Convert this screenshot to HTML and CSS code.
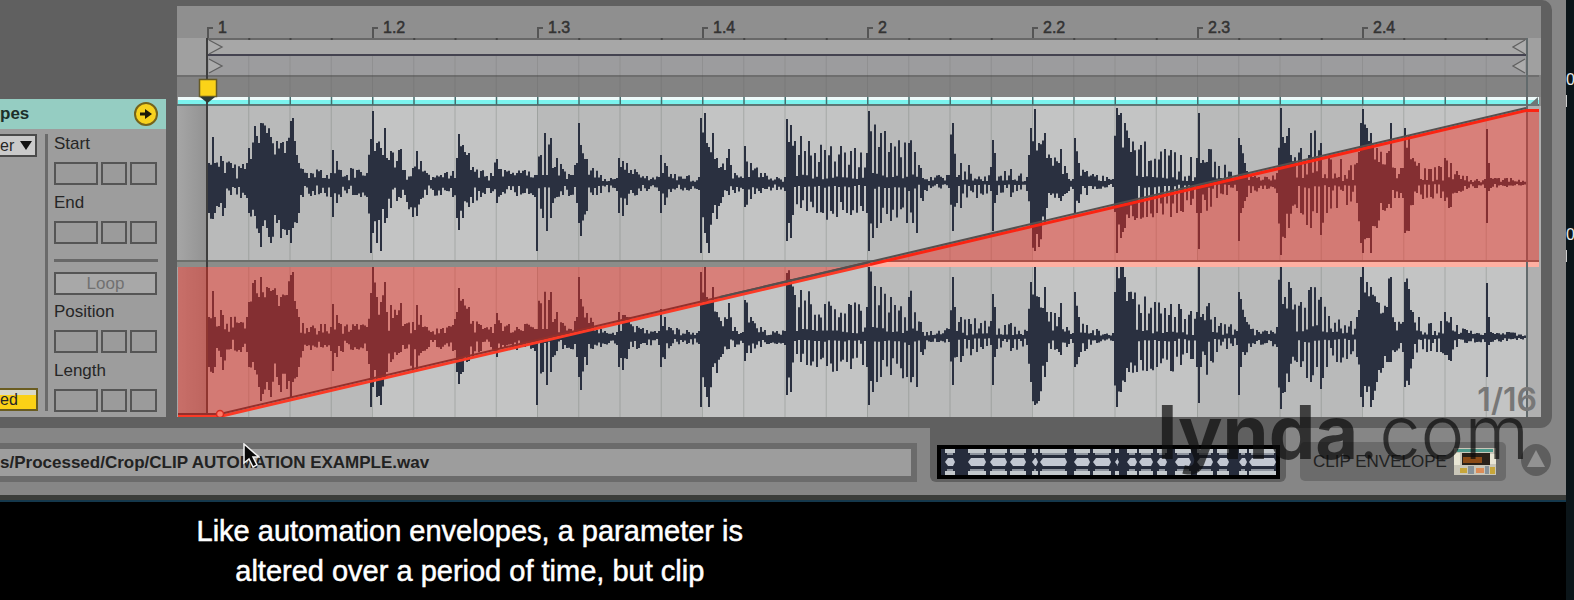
FILE: index.html
```html
<!DOCTYPE html>
<html lang="en">
<head>
<meta charset="utf-8">
<title>Clip automation example</title>
<link rel="stylesheet" href="styles.css">
</head>
<body>
<div class="stage">
  <div class="player">
    <main class="window">
      <div class="editor">
        <section class="envelopes">
          <header class="env-head">
            <h2>pes</h2>
            <button class="env-go" aria-label="Show envelopes">
              <svg viewBox="0 0 24 24"><circle cx="12" cy="12" r="11" fill="#f7d21e" stroke="#75631a" stroke-width="2"/><path d="M6 12h7" stroke="#1c1908" stroke-width="3"/><path d="M11 7l7 5-7 5z" fill="#1c1908"/></svg>
            </button>
          </header>
          <div class="env-body">
            <div class="env-device">
              <div class="device-pick"><select aria-label="Control"><option>er</option></select><span class="caret"></span></div>
              <button class="linked">ed</button>
            </div>
            <div class="env-region">
              <div class="field" role="group" aria-labelledby="f1"><span id="f1">Start</span><div class="cells"><input aria-label="Start bar"><input aria-label="Start beat"><input aria-label="Start sixteenth"></div></div>
              <div class="field" role="group" aria-labelledby="f2"><span id="f2">End</span><div class="cells"><input aria-label="End bar"><input aria-label="End beat"><input aria-label="End sixteenth"></div></div>
              <div class="loop-row"><button class="loop">Loop</button></div>
              <div class="field" role="group" aria-labelledby="f3"><span id="f3">Position</span><div class="cells"><input aria-label="Position bar"><input aria-label="Position beat"><input aria-label="Position sixteenth"></div></div>
              <div class="field" role="group" aria-labelledby="f4"><span id="f4">Length</span><div class="cells"><input aria-label="Length bar"><input aria-label="Length beat"><input aria-label="Length sixteenth"></div></div>
            </div>
          </div>
        </section>
        <section class="sample">
          <div class="ruler">
            <span>1</span><span>1.2</span><span>1.3</span><span>1.4</span><span>2</span><span>2.2</span><span>2.3</span><span>2.4</span>
          </div>
          <svg class="wave" id="wave" viewBox="177 38 1364 379" preserveAspectRatio="none" role="img" aria-label="Sample waveform with envelope"></svg>
          <span class="grid-size">1/16</span>
        </section>
      </div>
      <footer class="status">
        <div class="path"><input aria-label="Sample path" readonly value="s/Processed/Crop/CLIP AUTOMATION EXAMPLE.wav"></div>
        <div class="overview"><svg id="mini" viewBox="0 0 343 34" preserveAspectRatio="none" role="img" aria-label="Clip overview"></svg></div>
        <div class="device-tab">
          <button class="tab">CLIP ENVELOPE
            <svg viewBox="0 0 42 27"><path fill="#c9c6b8" d="M0 0h42v27H0z"/><path fill="#4d9a8b" d="M3 1h36v3H3z"/><path fill="#292119" d="M8 5h28v12H8z"/><path fill="#8b4b17" d="M9 9h19v6H9z"/><path fill="#e8e5d4" d="M0 5h6v12H0zM36 6h6v10h-6z"/><path fill="#c7a63b" d="M6 20h7v5H6zM36 19h5v7h-5z"/><path fill="#dc8d58" d="M22 20h8v5h-8z"/><path fill="#86929a" d="M14 18h6v8h-6zM31 18h4v8h-4z"/></svg>
          </button>
          <button class="fold" aria-label="Fold"><svg viewBox="0 0 32 36"><ellipse cx="16" cy="18" rx="15" ry="16" fill="#5e5e5e"/><path d="M16 8l9 17H7z" fill="#929292"/></svg></button>
        </div>
      </footer>
      <div class="watermark"><b>lynda</b>.com</div>
      <svg class="cursor" viewBox="0 0 18 26"><path d="M2 1v19l5-4 4 8 4-2-4-8h6z" fill="#080808" stroke="#f2f2f2" stroke-width="1.5"/></svg>
    </main>
    <p class="caption">Like automation envelopes, a parameter is<br>altered over a period of time, but clip</p>
  </div>
  <aside class="edge"><span>0</span><i></i><span>0</span><i></i></aside>
</div>
<script src="wave.js"></script>
</body>
</html>
```

FILE: styles.css
```css
* { box-sizing: border-box; }
body {
  margin: 0;
  background: #000;
  color: #262626;
  font-family: "Liberation Sans", Arial, sans-serif;
  font-size: 16px;
}
button, input, select { font: inherit; color: inherit; margin: 0; padding: 0; border-radius: 0; }
.stage { display: flex; min-height: 100vh; }
.player { flex: 1; min-width: 0; }
.window {
  position: relative;
  background: #868686;
  border-bottom: 2px solid #15384c;
}
.editor {
  display: flex;
  align-items: flex-end;
  gap: 11px;
  margin-right: 14px;
  padding: 6px 11px 11px 0;
  background: #606060;
  border-radius: 0 10px 12px 0;
}

.envelopes { width: 166px; background: #9d9d9d; overflow: hidden; }
.env-head {
  display: flex;
  align-items: center;
  justify-content: space-between;
  height: 30px;
  padding-right: 8px;
  background: #95cdc2;
}
.env-head h2 { margin: 0; font-size: 17px; line-height: 20px; color: #1c2f2a; }
.env-go { width: 24px; height: 24px; border: 0; background: none; }
.env-go svg { display: block; }
.env-body { display: flex; height: 288px; padding-top: 5px; }
.env-device {
  display: flex;
  flex-direction: column;
  justify-content: space-between;
  width: 48px;
  height: 277px;
  border-right: 3px solid #6a6a6a;
}
.device-pick {
  position: relative;
  width: 37px;
  height: 23px;
  background: #cacaca;
  border: 2px solid #4a4a4a;
  border-left: 0;
}
.device-pick select { appearance: none; width: 100%; height: 100%; border: 0; background: none; line-height: 18px; }
.caret {
  position: absolute;
  right: 3px;
  top: 5px;
  border: 6px solid transparent;
  border-top: 9px solid #111;
  border-bottom: 0;
}
.linked {
  width: 38px;
  height: 23px;
  background: linear-gradient(#d8d8c8 5px, #fbd116 5px);
  border: 2px solid #6a5c20;
  border-left: 0;
  text-align: left;
  line-height: 18px;
}
.env-region { padding-left: 6px; width: 110px; }
.field { height: 59px; font-size: 17px; line-height: 20px; }
.cells { display: grid; grid-template-columns: 44px 26px 27px; gap: 3px; margin-top: 8px; }
.cells input { width: 100%; height: 23px; border: 2px solid #555; background: #9b9b9b; }
.loop-row { border-top: 3px solid #686868; margin: 7px 0; padding-top: 10px; }
.loop { width: 103px; height: 23px; border: 2px solid #555; background: #a8a8a8; color: #717171; font-size: 17px; line-height: 18px; }

.sample { position: relative; flex: 1; min-width: 0; background: #8f8f8f; }
.ruler {
  display: grid;
  grid-template-columns: repeat(8, 1fr);
  align-items: end;
  height: 32px;
  padding: 0 14px 0 30px;
}
.ruler span {
  position: relative;
  height: 11px;
  padding-left: 9px;
  border-left: 2px solid #555;
  line-height: 2px;
  color: #333;
  -webkit-text-stroke: 0.5px #333;
}
.ruler span::before { content: ""; position: absolute; left: 0; top: 0; width: 4px; height: 2px; background: #555; }
.wave { display: block; width: 100%; height: 379px; }
.grid-size {
  position: absolute;
  right: 4px;
  bottom: 0;
  font: 600 32px/34px Inter, "Liberation Sans", sans-serif;
  color: #777;
}

.status { display: flex; height: 72px; padding-right: 14px; border-bottom: 5px solid #3b3d3a; }
.path { flex: 1; min-width: 0; padding: 15px 13px 0 0; }
.path input {
  width: 100%;
  height: 39px;
  border: 6px solid #6b6b6b;
  border-left: 0;
  background: #9d9d9d;
  font-size: 17px;
  font-weight: bold;
  color: #222;
}
.overview { width: 356px; height: 54px; padding: 17px 6px 0 7px; background: #606060; border-radius: 0 0 6px 6px; }
.overview svg { display: block; width: 100%; height: 34px; }
.device-tab { display: flex; align-items: flex-start; gap: 14px; padding: 14px 0 0 14px; }
.tab {
  display: flex;
  align-items: center;
  gap: 7px;
  width: 206px;
  height: 39px;
  padding-left: 13px;
  border: 0;
  border-radius: 5px;
  background: #6b6b6b;
  font-size: 17px;
  white-space: nowrap;
  color: #222;
}
.tab svg { width: 42px; height: 27px; flex: none; }
.fold { width: 32px; height: 36px; border: 0; background: none; }
.fold svg { display: block; }

.watermark {
  position: absolute;
  right: 37px;
  bottom: 22px;
  font: 300 74px/92px Inter, sans-serif;
  color: rgba(12, 12, 12, 0.7);
  pointer-events: none;
}
.watermark b { font-weight: 700; }
.cursor { position: absolute; left: 242px; top: 443px; width: 18px; height: 26px; }

.caption {
  width: 60%;
  margin: 0;
  padding: 9px 0 8px;
  text-align: center;
  font-size: 29px;
  line-height: 40px;
  color: #fff;
  -webkit-text-stroke: 0.5px #fff;
}
.edge {
  width: 8px;
  padding-top: 70px;
  overflow: hidden;
  background: #0b1519;
  color: #e8e8e8;
  line-height: 20px;
}
.edge span { display: block; }
.edge i { display: block; width: 1px; height: 12px; margin: 5px 0 118px; background: #ccc; }
```

FILE: wave.js
```js
// Waveform keyframes: x, height above centre, depth below centre, 1 when the stretch is sparse.
const keys = `208 20 30|212 46 36|214 20 30|220 27 20|222 22 33|230 20 12|240 15 15|246 20 15|248 35 30|253 57 33|257 40 50|260 60 64|266 50 45|270 46 60|276 42 40|280 40 55|285 42 52|290 62 60|292 65 45|295 28 40|298 20 30|301 14 14|310 10 13|320 13 10|329 10 14|331 33 34|335 22 20|340 13 14|355 13 12|366 10 14|370 44 70|372 72 50|375 40 60|379 35 68|383 55 40|386 25 35|390 32 25|395 22 18|399 34 15|403 13 12|412 15 34|415 32 33|420 22 16|426 10 12|440 8 12|452 12 14|455 25 35|457 49 47|462 38 35|467 30 24|472 16 20|480 12 14|490 10 10|495 24 20|500 14 12|515 10 13|524 13 10|533 8 14|536 46 68 1|541 46 35 1|545 47 48 1|549 45 35|552 15 20|556 25 14|562 14 12|570 8 12|576 20 20|578 60 40|580 38 53|585 24 28|592 15 12|600 8 10|615 5 8|618 25 30|621 22 33|626 20 22|635 11 12|645 7 8|657 6 8|660 28 30|663 20 22|670 9 9|685 7 7|697 6 7|700 65 70|703 70 50|706 40 60|708 36 70|712 50 30|716 25 36|720 16 20|727 34 12|733 10 10|742 5 6|744 37 24|749 20 16|760 10 10|775 6 7|783 6 8|785 64 58|789 58 55|793 42 30 1|800 47 25 1|806 45 28 1|815 35 30 1|823 33 37 1|835 36 34 1|850 32 32 1|862 28 28 1|866 30 30|868 72 68|871 60 55 1|875 55 45 1|880 50 40 1|890 40 38 1|905 35 40 1|908 40 70 1|911 50 40 1|916 35 50 1|920 15 15|922 5 18|930 6 5|948 8 5|951 60 48|956 33 20 1|960 20 25 1|968 18 20 1|975 18 15 1|990 16 8|991 43 48|993 30 20|996 8 12 1|1010 14 14 1|1025 6 8|1030 55 45|1033 74 68|1038 40 64|1043 50 40|1046 25 25|1050 25 12|1058 20 15|1060 34 18|1065 10 10|1072 4 6|1074 45 30|1078 20 20|1085 12 12|1095 8 6|1112 4 4|1115 75 70|1119 70 55|1124 60 45|1128 45 35|1135 42 35 1|1145 38 34 1|1155 30 30 1|1170 33 34 1|1180 28 28 1|1190 26 22 1|1195 25 30|1197 70 66|1200 20 30|1208 34 38 1|1215 24 15 1|1225 17 12 1|1235 6 8|1238 45 58|1240 38 30|1244 20 18|1250 8 10|1265 6 6|1275 10 10|1279 75 72|1283 40 55|1287 55 45|1295 30 25 1|1300 35 30 1|1310 50 45 1|1316 72 30 1|1320 40 52 1|1325 25 30 1|1335 28 25 1|1345 22 22 1|1355 20 20|1360 60 60|1362 74 70|1366 55 55|1370 50 70|1376 35 45|1385 30 25|1389 60 25|1393 15 15|1402 15 15|1404 55 50|1408 48 48|1412 25 22|1418 20 15 1|1430 14 14 1|1440 16 15 1|1444 25 18|1449 20 24|1455 12 10|1465 7 6|1475 4 5|1484 4 5|1485 54 40|1487 20 8|1490 5 5|1505 5 4|1527 2 2`
  .split('|').map(k => k.split(' ').map(Number));

function columns(seed, step) {
  let s = seed, k = 0;
  const rnd = () => (s = (s * 16807) % 2147483647) / 2147483647;
  const out = [];
  for (let x = 208, n = 0; x < 1527; x += step, n++) {
    while (k < keys.length - 2 && keys[k + 1][0] <= x) k++;
    const a = keys[k], b = keys[k + 1], t = Math.min(1, (x - a[0]) / (b[0] - a[0]));
    const peak = x - a[0] < step;
    const top = a[1] + (b[1] - a[1]) * t, bottom = a[2] + (b[2] - a[2]) * t;
    // Quiet stretches flicker more than the loud hits.
    const low = top < 30 ? 0.2 : 0.55;
    let up = peak ? a[1] : top * (low + (1.15 - low) * rnd());
    let down = peak ? a[2] : bottom * (low + (1.1 - low) * rnd());
    if (a[3]) {
      const phase = n % 5;
      if (phase === 2 || phase === 4) up = up * 0.15 + 1;
      if (phase === 0 || phase === 3) down = down * 0.1 + 1;
    }
    out.push([x, up, down]);
  }
  return out;
}
function wavePath(cy, seed, limit) {
  return columns(seed, 2).map(([x, u, d]) => {
    u = Math.min(u, limit);
    return `M${x} ${(cy - u).toFixed(1)}h2v${(u + d).toFixed(1)}h-2z`;
  }).join('');
}
const rect = (x, y, w, h, f) => `<rect x="${x}" y="${y}" width="${w}" height="${h}" fill="${f}"/>`;

let g = `<defs><linearGradient id="pad"><stop offset="0" stop-color="#a6a6a6"/><stop offset="1" stop-color="#929292"/></linearGradient></defs>`;
g += rect(177, 38, 1364, 37, '#a0a0a0') + rect(207, 39, 1320, 16, '#a7a7a7') + rect(207, 56, 1320, 19, '#9c9c9e');
g += rect(207, 38, 1320, 2, '#686868') + rect(207, 54, 1320, 2, '#444350');
g += rect(177, 75, 1364, 22, '#838383') + rect(177, 75, 1362, 2, '#6e6e6e');
g += rect(177, 106, 30, 311, 'url(#pad)');
for (let i = 0; i < 8; i++) g += rect(207 + i * 165, 106, 165, 311, i % 2 ? '#c3c4c4' : '#b9baba');
g += rect(1527, 106, 14, 311, '#b0b0b0');
g += rect(178, 97, 1361, 3, '#eefafa') + rect(178, 100, 1361, 5, '#7bf3ee') + rect(177, 104, 1362, 2, '#5d7776');
for (let i = 1; i < 32; i++) {
  const x = 207 + i * 41.25;
  g += rect(x, 56, 1, 41, 'rgba(70,70,70,.14)') + rect(x, 97, 1.5, 8, '#456f6e') + rect(x, 106, 1, 311, 'rgba(80,90,80,.25)');
  if (i % 4) g += rect(x, 38, 2, 2, '#444');
}
g += rect(207, 183, 1320, 1, '#2a3040') + rect(207, 337, 1320, 1, '#2a3040');
g += `<path fill="#2a3040" d="${wavePath(183, 91, 75)}${wavePath(337, 4021, 70)}"/>`;
g += rect(177, 260, 1362, 2, '#6c6f6b') + rect(177, 262, 693, 5, '#8b8d8a') + rect(868, 262, 671, 5, '#ffb0a2');
g += rect(206, 38, 2, 379, '#3e3e3e') + rect(1526, 38, 2, 379, '#626a6c');
g += `<path d="M178 267H855L220 414.500L210 417H178zM870 262L1526 109H1539V262z" fill="rgb(242,46,32)" fill-opacity=".454"/>`;
g += `<path d="M178 416H222L870 264.500" fill="none" stroke="#fb3a26" stroke-width="3"/>`;
g += `<path d="M870 264.500L1526 110.500H1539" fill="none" stroke="#fb2412" stroke-width="3"/>`;
g += `<path d="M178 414H220L870 262" fill="none" stroke="#93302c" stroke-width="2"/><path d="M720 297L1526 108" fill="none" stroke="#56504f" stroke-width="2"/>`;
g += `<circle cx="220" cy="414" r="3.500" fill="#ff7a68" stroke="#d52c20" stroke-width="1.500"/><path d="M1528 106l10-9v9z" fill="#6d7777"/>`;
for (const y of [47, 66]) g += `<path d="M209 ${y - 7}l13 7l-13 7M1525 ${y - 7}l-12 7l12 7" fill="#acacac" stroke="#606060" stroke-width="1.300"/>`;
g += `<rect x="199.500" y="79.500" width="17" height="17" fill="#fbd318" stroke="#665a25" stroke-width="1.500"/><path d="M200 97h15l-7.500 6z" fill="#303a32"/>`;
document.getElementById('wave').innerHTML = g;

// Overview: two channels of solid blocks, cut by the loud hits, inside a black frame.
let m = rect(0, 0, 343, 34, '#000') + rect(4, 4, 335, 26, '#262c3c');
const blocks = [[8, 10], [31, 18], [53, 17], [73, 16], [95, 6], [103, 27], [137, 16], [156, 18], [178, 4], [190, 10], [202, 14], [220, 10], [238, 16], [260, 16], [280, 12], [302, 8], [312, 27]];
for (const [x, w] of blocks) {
  m += rect(x, 4, w, 4, '#c3c8cc') + rect(x + 2, 8, w - 4, 2, '#8e949e');
  m += `<path d="M${x} 17l3-4h${w - 5}l2 4l-2 4h${5 - w}z" fill="#c3c8d2"/>`;
  m += rect(x + 2, 24, w - 4, 2, '#8e949e') + rect(x, 26, w, 4, '#c3c8cc');
}
document.getElementById('mini').innerHTML = m;
```
